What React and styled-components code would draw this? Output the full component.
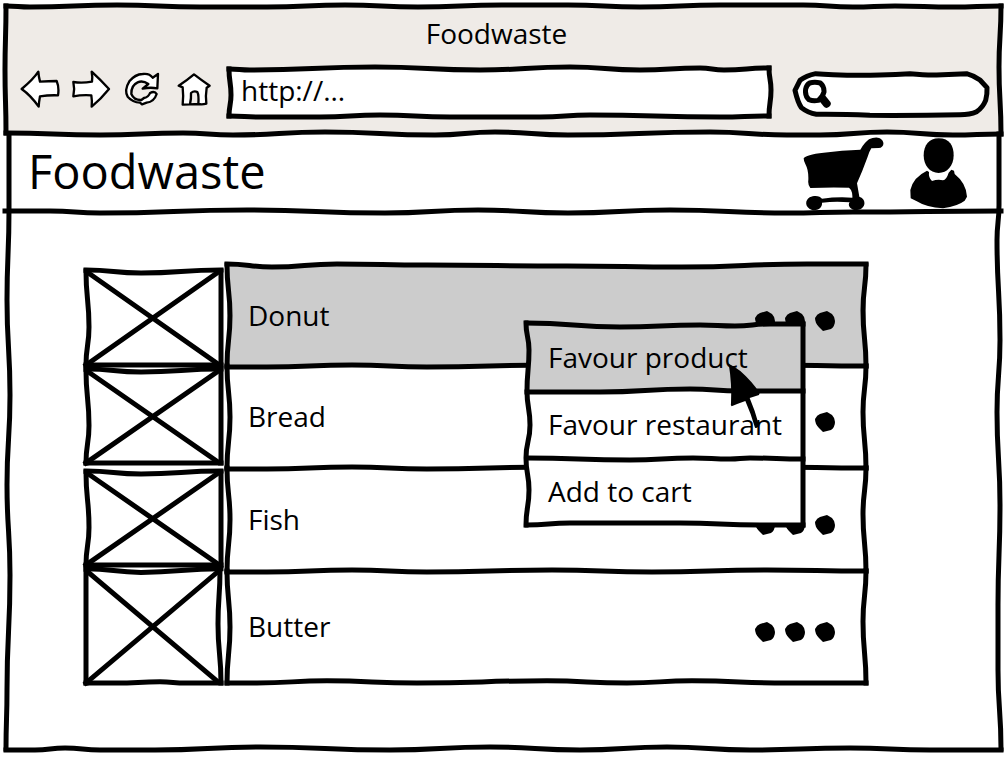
import React from "react";
import styled, { createGlobalStyle } from "styled-components";

const GlobalStyle = createGlobalStyle`
  *, *::before, *::after { box-sizing: border-box; }
  body {
    margin: 0;
    background: #fff;
    color: #000;
    font-family: "Open Sans", "Noto Sans", sans-serif;
    font-size: 28px;
    line-height: 36px;
  }
  button, input { font: inherit; color: inherit; }
`;

/* Hand-drawn edges: each edge is a list of points joined by soft waves. */
const wave = (points, vertical) =>
  points
    .map(([x, y], i) => {
      if (i === 0) return `M${x} ${y}`;
      const [px, py] = points[i - 1];
      if (vertical) {
        const m = (py + y) / 2;
        return `C${px} ${m} ${x} ${m} ${x} ${y}`;
      }
      const m = (px + x) / 2;
      return `C${m} ${py} ${m} ${y} ${x} ${y}`;
    })
    .join("");

const SketchSvg = styled.svg`
  position: absolute;
  inset: 0;
  width: 100%;
  height: 100%;
  overflow: visible;
  pointer-events: none;
  fill: none;
  stroke: #000;
  stroke-width: 5px;
  stroke-linecap: square;
  stroke-linejoin: round;

  path { vector-effect: non-scaling-stroke; }
`;

function Sketch({ box, across = [], down = [], shape }) {
  return (
    <SketchSvg viewBox={box} preserveAspectRatio="none" aria-hidden="true">
      {across.map((p, i) => <path key={`a${i}`} d={wave(p, false)} />)}
      {down.map((p, i) => <path key={`d${i}`} d={wave(p, true)} />)}
      {shape && <path d={shape} />}
    </SketchSvg>
  );
}

const Page = styled.div`
  min-height: 100vh;
  padding: 6px 4px 8px 6px;
`;

const Chrome = styled.header`
  position: relative;
  background: #efebe7;
  padding-bottom: 10px;
`;

const WindowTitle = styled.div`
  position: relative;
  height: 54px;
  padding-right: 14px;
  display: flex;
  align-items: center;
  justify-content: center;
`;

const Toolbar = styled.div`
  position: relative;
  height: 64px;
  padding: 0 14px;
  display: flex;
  align-items: center;
`;

const Nav = styled.nav`
  display: flex;
  gap: 11px;
  padding-bottom: 4px;
  margin-right: 16px;
`;

const PlainButton = styled.button`
  display: block;
  padding: 0;
  border: 0;
  background: none;
  cursor: pointer;
  line-height: 0;
`;

const ToolIcon = styled.svg`
  width: 40px;
  height: 40px;
  fill: #fff;
  stroke: #000;
  stroke-width: 7px;
  stroke-linejoin: round;
  stroke-linecap: round;
`;

const AddressField = styled.label`
  position: relative;
  flex: 1;
  height: 47px;
  background: #fff;
`;

const SearchField = styled.label`
  position: relative;
  flex: 0 0 192px;
  height: 41px;
  margin: 4px 0 0 25px;
  border-radius: 20px;
  background: #fff;
  display: flex;
  align-items: center;
  padding-left: 8px;
`;

const TextInput = styled.input`
  display: block;
  width: 100%;
  min-width: 0;
  height: 100%;
  padding: 0 12px 5px;
  border: 0;
  outline: 0;
  background: none;
`;

const Magnifier = styled.svg`
  flex: none;
  width: 30px;
  height: 30px;
  fill: none;
  stroke: #000;
  stroke-linecap: round;
  stroke-linejoin: round;
`;

const Body = styled.div`
  position: relative;
`;

const AppBar = styled.div`
  position: relative;
  height: 77px;
  padding: 0 33px 0 22px;
  display: flex;
  align-items: center;
`;

const Brand = styled.h1`
  margin: 0 auto 0 0;
  padding-bottom: 4px;
  font-size: 47px;
  font-weight: 400;
  line-height: 60px;
`;

const BarIcon = styled.svg`
  width: ${(p) => p.$width}px;
  height: 76px;
  fill: #000;
`;

const BarActions = styled.div`
  display: flex;
  gap: 25px;
`;

const Main = styled.main`
  padding: 54px 135px 66px 80px;
`;

const List = styled.ul`
  list-style: none;
  margin: 0;
  padding: 0;
`;

const Item = styled.li`
  position: relative;
  display: flex;
  align-items: flex-start;
  gap: 6px;
  height: ${(p) => p.$height}px;
`;

const Thumb = styled.div`
  position: relative;
  flex: 0 0 135px;
  height: ${(p) => p.$height}px;
  margin-top: ${(p) => p.$lead}px;
`;

const Panel = styled.div`
  position: relative;
  flex: 1;
  align-self: stretch;
  display: flex;
  align-items: center;
  justify-content: space-between;
  padding: 0 31px 0 21px;
  background: ${(p) => (p.$active ? "#ccc" : "#fff")};
`;

const Label = styled.span`
  position: relative;
  padding-bottom: 2px;
`;

const MoreButton = styled(PlainButton)`
  padding-top: 10px;

  svg { width: 80px; height: 20px; overflow: visible; }
`;

const Menu = styled.div`
  position: absolute;
  z-index: 2;
  top: 59px;
  right: 63px;
  width: 276px;
  background: #fff;
`;

const MenuItem = styled.button`
  display: block;
  width: 100%;
  height: 67px;
  padding: 0 21px 2px;
  border: 0;
  background: ${(p) => (p.$active ? "#ccc" : "#fff")};
  text-align: left;
  white-space: nowrap;
  cursor: pointer;
`;

const Pointer = styled.svg`
  position: absolute;
  z-index: 3;
  top: 97px;
  right: 105px;
  width: 34px;
  height: 67px;
  pointer-events: none;
`;

const tools = [
  {
    name: "Back",
    box: "60 210 120 120",
    d: "M65 267Q100 238 115 215Q116 230 120 245Q146 243 170 243Q178 262 174 286Q146 285 120 289Q117 305 116 320Q92 286 65 267Z",
  },
  {
    name: "Forward",
    box: "213 210 120 120",
    d: "M327 267Q300 238 275 215Q278 230 276 245Q246 250 220 246Q225 268 220 289Q246 284 274 286Q277 305 275 320Q302 298 327 267Z",
  },
  {
    name: "Reload",
    box: "366 210 120 120",
    d: "M474 222L458 233Q448 219 428 222Q405 223 388 244Q372 270 383 290Q398 307 420 308L426 313L440 308Q462 306 470 282Q464 272 450 279Q446 291 432 294L424 300Q402 301 394 282Q393 256 413 247Q428 240 445 252L428 266Q450 261 472 265Z",
  },
  {
    name: "Home",
    box: "519 210 120 120",
    d: "M536 257Q562 240 582 223Q604 240 629 257L620 263Q616 288 619 311Q606 315 595 312Q597 285 592 276Q582 271 573 279Q574 296 570 313L548 314Q551 288 548 262ZM570 313L595 312",
  },
];

const products = [
  { name: "Donut", height: 101, lead: 6, thumb: 94, active: true },
  { name: "Bread", height: 102, lead: 4, thumb: 93 },
  { name: "Fish", height: 103, lead: 4, thumb: 93 },
  { name: "Butter", height: 112, lead: -1, thumb: 113, tall: true },
];

const rowTop = {
  active: [[0, -1], [45, 2], [110, -1], [200, 0], [340, 1], [455, 2], [580, -1], [639, -1]],
  plain: [[0, 1], [40, 1], [125, -1], [200, 1], [325, -1], [425, 1], [540, -1], [639, 0]],
};

function Placeholder({ tall }) {
  return (
    <Sketch
      box="0 0 135 94"
      across={[
        [[0, -1], [55, 2], [135, -1]],
        tall ? [[0, 94], [30, 94], [74, 93], [100, 94], [135, 94]] : [[0, 94], [135, 94]],
      ]}
      down={
        tall
          ? [[[0, 0], [0, 94]], [[134, 0], [132, 45], [135, 94]]]
          : [[[0, 0], [3, 56], [0, 94]], [[135, 0], [135, 94]]]
      }
      shape="M1 1L132 93M131 2L0 94"
    />
  );
}

function Dots() {
  return (
    <svg viewBox="0 0 80 20" aria-hidden="true">
      {[0, 30, 60].map((x) => (
        <path
          key={x}
          transform={`translate(${x} 0)`}
          d="M0 7Q2 3 5 2L12 0L17 3Q20 6 20 10Q20 15 16 18L8 20L4 16Q0 12 0 7Z"
        />
      ))}
    </svg>
  );
}

function ContextMenu() {
  return (
    <>
      <Menu role="menu" aria-label="Donut actions">
        <MenuItem role="menuitem" $active>Favour product</MenuItem>
        <MenuItem role="menuitem">Favour restaurant</MenuItem>
        <MenuItem role="menuitem">Add to cart</MenuItem>
        <Sketch
          box="527 324 276 201"
          across={[
            [[527, 323], [620, 327], [700, 325], [735, 326], [770, 324], [803, 324]],
            [[527, 392], [600, 392], [690, 389], [740, 391], [803, 391]],
            [[527, 458], [630, 460], [693, 458], [730, 459], [750, 458], [803, 459]],
            [[527, 525], [570, 523], [680, 523], [760, 525], [803, 525]],
          ]}
          down={[
            [[526, 323], [529, 350], [527, 391], [530, 425], [526, 458], [529, 490], [526, 525]],
            [[803, 324], [803, 525]],
          ]}
        />
      </Menu>
      <Pointer viewBox="650 335 102 201" aria-hidden="true">
        <path d="M655 340Q672 348 690 362Q726 394 748 428L746 434L718 443Q734 480 746 525Q742 536 734 532Q722 490 705 452Q682 460 664 468Q660 466 662 458Q665 400 655 340Z" />
      </Pointer>
    </>
  );
}

export default function App() {
  return (
    <>
      <GlobalStyle />
      <Page>
        <Chrome>
          <WindowTitle>Foodwaste</WindowTitle>
          <Toolbar>
            <Nav aria-label="Browser">
              {tools.map((t) => (
                <PlainButton key={t.name} aria-label={t.name}>
                  <ToolIcon viewBox={t.box}><path d={t.d} /></ToolIcon>
                </PlainButton>
              ))}
            </Nav>
            <AddressField>
              <TextInput aria-label="Address" defaultValue="http://..." />
              <Sketch
                box="229 69 541 47"
                across={[
                  [[229, 69], [250, 70], [375, 67], [480, 70], [570, 67], [640, 70], [700, 68], [724, 70], [769, 68]],
                  [[229, 116], [260, 117], [320, 117], [380, 115], [450, 117], [540, 117], [590, 115], [720, 117], [769, 116]],
                ]}
                down={[
                  [[229, 69], [231, 95], [229, 116]],
                  [[769, 68], [771, 90], [769, 116]],
                ]}
              />
            </AddressField>
            <SearchField>
              <Magnifier viewBox="400 238 90 90" aria-hidden="true">
                <path strokeWidth="15" d="M420 250Q435 246 452 250Q464 260 463 277Q458 294 446 302Q430 305 418 300Q405 290 408 268Q411 255 420 250Z" />
                <path strokeWidth="24" d="M459 297L471 312" />
              </Magnifier>
              <TextInput type="search" aria-label="Search" />
              <Sketch
                box="376 221 575 123"
                shape="M376 270L391 240Q410 226 438 220Q460 222 490 223Q560 226 630 224Q680 222 720 220Q770 225 800 224L890 220Q912 226 930 239L951 262Q952 282 947 300Q938 322 920 334Q900 343 870 343Q740 346 600 345Q510 341 440 342Q415 338 395 322Q384 305 376 270Z"
              />
            </SearchField>
          </Toolbar>
          <Sketch
            box="6 6 995 128"
            across={[
              [[6, 6], [30, 7], [117, 5], [200, 7], [267, 7], [345, 5], [418, 7], [502, 5], [568, 5], [640, 7], [720, 5], [803, 5], [853, 7], [895, 6], [953, 7], [1001, 6]],
              [[6, 133], [100, 135], [183, 133], [233, 135], [325, 132], [435, 135], [495, 132], [568, 135], [710, 132], [787, 135], [820, 135], [887, 132], [953, 135], [1001, 134]],
            ]}
            down={[
              [[6, 6], [5, 70], [6, 133]],
              [[1001, 6], [999, 67], [1001, 134]],
            ]}
          />
        </Chrome>

        <Body>
          <Sketch
            box="6 134 995 615"
            across={[[[6, 750], [35, 750], [65, 748], [100, 750], [155, 750], [260, 747], [390, 750], [490, 747], [580, 750], [667, 747], [750, 750], [850, 748], [930, 750], [1001, 750]]]}
            down={[
              [[9, 134], [9, 210], [7, 300], [10, 395], [7, 485], [10, 575], [7, 690], [6, 749]],
              [[999, 134], [999, 205], [997, 240], [1000, 340], [997, 412], [1000, 505], [998, 605], [998, 670], [1001, 749]],
            ]}
          />
          <AppBar>
            <Brand>Foodwaste</Brand>
            <BarActions>
              <PlainButton aria-label="Cart">
                <BarIcon $width={82} viewBox="38 15 246 228">
                  <path d="M40 85Q46 74 100 68Q155 61 210 59Q222 38 236 28Q248 22 262 23C285 27 284 53 265 54L243 55Q235 68 232 80Q216 124 200 160L207 200C229 205 228 238 200 240C182 242 170 225 178 217Q136 213 95 218C97 235 80 243 65 240C43 233 43 212 58 202C75 194 90 199 95 206Q140 200 186 203Q187 190 182 180L176 173Q120 171 60 174Q52 165 54 150Q55 120 46 104Q40 95 40 85Z" />
                </BarIcon>
              </PlainButton>
              <PlainButton aria-label="Account">
                <BarIcon $width={58} viewBox="361 15 174 228">
                  <path d="M447 25C480 25 492 48 492 76C492 108 472 129 447 129C420 129 402 106 402 76C402 46 418 25 447 25Z" />
                  <path d="M412 122Q370 142 362 180L363 205L380 213Q410 232 460 235Q505 228 525 212L532 200Q530 160 495 132L493 122L485 119L477 128Q470 150 460 151Q445 147 427 153Q416 143 418 126Z" />
                </BarIcon>
              </PlainButton>
            </BarActions>
            <Sketch
              box="6 134 995 77"
              across={[[[5, 211], [50, 211], [100, 213], [247, 210], [385, 213], [478, 210], [568, 213], [670, 210], [787, 213], [853, 212], [1001, 211]]]}
            />
          </AppBar>

          <Main>
            <List>
              {products.map((p) => (
                <Item key={p.name} $height={p.height}>
                  <Thumb $height={p.thumb} $lead={p.lead}>
                    <Placeholder tall={p.tall} />
                  </Thumb>
                  <Panel $active={p.active}>
                    <Label>{p.name}</Label>
                    <MoreButton aria-label={`More actions for ${p.name}`}>
                      <Dots />
                    </MoreButton>
                    <Sketch
                      box="0 0 639 100"
                      across={[
                        p.active ? rowTop.active : rowTop.plain,
                        ...(p.tall
                          ? [[[0, 100], [30, 100], [100, 98], [190, 100], [320, 98], [400, 100], [465, 98], [560, 100], [639, 100]]]
                          : []),
                      ]}
                      down={[
                        [[0, 0], [3, 50], [0, 100]],
                        [[639, 0], [636, 45], [639, 100]],
                      ]}
                    />
                  </Panel>
                  {p.active && <ContextMenu />}
                </Item>
              ))}
            </List>
          </Main>
        </Body>
      </Page>
    </>
  );
}
